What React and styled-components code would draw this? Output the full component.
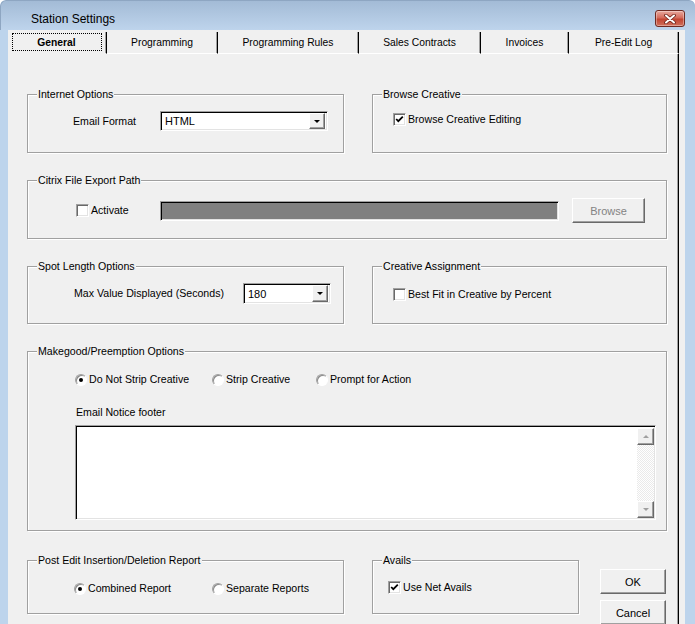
import React from "react";
import styled, { createGlobalStyle, css } from "styled-components";

const GlobalStyle = createGlobalStyle`
    html, body {
        margin: 0;
        padding: 0;
        background: #ffffff;
    }
    body {
        font-family: "Liberation Sans", Arial, sans-serif;
        color: #000;
    }
`;

const raised = css`
    box-sizing: border-box;
    border: 1px solid;
    border-color: #ffffff #696969 #696969 #ffffff;
    box-shadow: inset -1px -1px 0 #a0a0a0;
    background: #f0f0f0;
`;

const sunken = css`
    box-sizing: border-box;
    border: 1px solid;
    border-color: #a0a0a0 #ffffff #ffffff #a0a0a0;
    box-shadow: inset 1px 1px 0 #000000, inset -1px -1px 0 #e3e3e3;
`;

const Window = styled.div`
    width: 695px;
    height: 624px;
    overflow: hidden;
    display: flex;
    flex-direction: column;
    background: #bdd4ec;
    border-top-left-radius: 6px;
    border-top-right-radius: 6px;
`;

const TitleBar = styled.div`
    height: 30px;
    flex: none;
    display: flex;
    align-items: center;
    padding: 6px 10px 0 30px;
    box-sizing: border-box;
    background: linear-gradient(#a3bbd6, #bed4ec);
    border-top: 1px solid #8ea6c2;
    border-left: 1px solid #8ea6c2;
    border-top-left-radius: 6px;
    border-top-right-radius: 6px;
`;

const Title = styled.span`
    flex: 1;
    font-size: 12px;
    color: #000;
`;

const CloseButton = styled.div`
    width: 30px;
    height: 17px;
    box-sizing: border-box;
    border: 1px solid #6e2a22;
    border-radius: 3px;
    background: linear-gradient(#e8a99e 0%, #d46b5c 45%, #c24532 55%, #d0705c 100%);
    box-shadow: inset 0 0 0 1px rgba(255, 255, 255, 0.35);
    display: flex;
    align-items: center;
    justify-content: center;
`;

const Body = styled.div`
    flex: 1;
    display: flex;
    padding: 0 10px 0 8px;
    min-height: 0;
`;

const Client = styled.div`
    flex: 1;
    background: #f0f0f0;
    padding-right: 6px;
    display: flex;
`;

const TabControl = styled.div`
    width: 671px;
    display: flex;
    flex-direction: column;
`;

const TabStrip = styled.div`
    display: flex;
    margin-top: 2px;
    flex: none;
`;

const Tab = styled.div`
    width: ${(p) => p.$w}px;
    height: 22px;
    box-sizing: border-box;
    border-right: 1px solid #000;
    border-bottom: 1px solid ${(p) => (p.$active ? "transparent" : "#ffffff")};
    box-shadow: inset -1px 0 0 #a0a0a0;
    display: flex;
    align-items: center;
    justify-content: center;
    font-size: 10.3px;
    font-weight: ${(p) => (p.$active ? "bold" : "normal")};
`;

const FocusRing = styled.span`
    width: 90px;
    height: 18px;
    margin: -1px 1px 0 0;
    box-sizing: border-box;
    border: 1px dotted #000;
    display: flex;
    align-items: center;
    justify-content: center;
`;

const Panel = styled.div`
    flex: 1;
    border-right: 1px solid #000;
    box-shadow: inset -1px 0 0 #a0a0a0;
    padding: 40px 0 0 19px;
    display: flex;
    flex-direction: column;
    gap: 27px;
    font-size: 10.6px;
`;

const Row = styled.div`
    display: flex;
    align-items: flex-start;
    gap: 28px;
    margin-top: ${(p) => p.$mt || 0}px;
`;

const GroupBox = styled.div`
    position: relative;
    width: ${(p) => p.$w}px;
    height: ${(p) => p.$h}px;
    flex: none;
    box-sizing: border-box;
    border: 1px solid #a0a0a0;
    box-shadow: inset 1px 1px 0 #ffffff, 1px 1px 0 #ffffff;
`;

const GroupTitle = styled.span`
    position: absolute;
    top: -7px;
    left: 9px;
    padding: 0 1px;
    line-height: 13px;
    background: #f0f0f0;
    white-space: nowrap;
`;

const GroupBody = styled.div`
    display: flex;
    flex-direction: ${(p) => p.$dir || "row"};
    align-items: ${(p) => (p.$dir === "column" ? "flex-start" : "center")};
    padding: ${(p) => p.$pt}px 0 0 ${(p) => p.$pl}px;
`;

const Label = styled.span`
    width: ${(p) => (p.$w ? `${p.$w}px` : "auto")};
    flex: none;
    line-height: 13px;
    white-space: nowrap;
`;

const Select = styled.div`
    ${sunken};
    width: ${(p) => p.$w}px;
    height: ${(p) => p.$h}px;
    background: #fff;
    display: flex;
    align-items: center;
    padding: 0 2px 0 4px;
    font-size: 11px;
`;

const SelectValue = styled.span`
    flex: 1;
`;

const DropButton = styled.div`
    ${raised};
    width: 16px;
    height: ${(p) => p.$h}px;
    display: flex;
    align-items: center;
    justify-content: center;
`;

const Arrow = styled.span`
    width: 0;
    height: 0;
    border-left: ${(p) => p.$size}px solid transparent;
    border-right: ${(p) => p.$size}px solid transparent;
    ${(p) =>
        p.$up
            ? css`border-bottom: ${p.$size}px solid ${p.$color};`
            : css`border-top: ${p.$size}px solid ${p.$color};`}
`;

const PathField = styled.div`
    ${sunken};
    width: 399px;
    height: 20px;
    background: #808080;
    margin-right: 13px;
`;

const PushButton = styled.div`
    ${raised};
    width: ${(p) => p.$w}px;
    height: 25px;
    display: flex;
    align-items: center;
    justify-content: center;
    font-size: 11px;
    color: ${(p) => (p.$disabled ? "#838383" : "#000")};
`;

const CheckItem = styled.div`
    display: flex;
    align-items: center;
    gap: 2px;
    width: ${(p) => (p.$w ? `${p.$w}px` : "auto")};
    flex: none;
`;

const CheckBox = styled.span`
    ${sunken};
    width: 13px;
    height: 13px;
    background: #fff;
    display: flex;
    align-items: center;
    justify-content: center;
    box-shadow: inset 1px 1px 0 #696969, inset -1px -1px 0 #e3e3e3;
`;

const RadioItem = styled.div`
    display: flex;
    align-items: center;
    gap: 2px;
    width: ${(p) => (p.$w ? `${p.$w}px` : "auto")};
    flex: none;
`;

const Radio = styled.span`
    width: 12px;
    height: 12px;
    box-sizing: border-box;
    border-radius: 50%;
    border: 1px solid;
    border-color: #a0a0a0 #ffffff #ffffff #a0a0a0;
    box-shadow: inset 1px 1px 0 #8a8a8a;
    background: #fff;
    display: flex;
    align-items: center;
    justify-content: center;
    &::after {
        content: "";
        display: ${(p) => (p.$checked ? "block" : "none")};
        width: 4px;
        height: 4px;
        border-radius: 50%;
        background: #000;
    }
`;

const Caption = styled.span`
    line-height: 13px;
    margin: 20px 0 6px 1px;
`;

const TextArea = styled.div`
    ${sunken};
    width: 581px;
    height: 95px;
    background: #fff;
    display: flex;
    justify-content: flex-end;
    padding: 2px 1px 1px 2px;
`;

const ScrollBar = styled.div`
    width: 17px;
    display: flex;
    flex-direction: column;
`;

const ScrollButton = styled.div`
    ${raised};
    height: 17px;
    display: flex;
    align-items: center;
    justify-content: center;
`;

const ScrollTrack = styled.div`
    flex: 1;
    background: repeating-conic-gradient(#ffffff 0 25%, #eaeaea 0 50%) 0 0 / 2px 2px;
`;

const ButtonColumn = styled.div`
    display: flex;
    flex-direction: column;
    gap: 6px;
    padding-top: 9px;
    margin-left: -7px;
`;

const CheckMark = () => (
    <svg width="9" height="9" viewBox="0 0 9 9">
        <polyline points="1.2,4 3.3,6.2 7.8,1.6" fill="none" stroke="#000" strokeWidth="1.8" />
    </svg>
);

const Check = ({ checked, label, w }) => (
    <CheckItem $w={w}>
        <CheckBox>{checked && <CheckMark />}</CheckBox>
        <Label>{label}</Label>
    </CheckItem>
);

const Option = ({ checked, label, w }) => (
    <RadioItem $w={w}>
        <Radio $checked={checked} />
        <Label>{label}</Label>
    </RadioItem>
);

const Combo = ({ value, w, h }) => (
    <Select $w={w} $h={h}>
        <SelectValue>{value}</SelectValue>
        <DropButton $h={h - 4}>
            <Arrow $size={3.5} $color="#000" />
        </DropButton>
    </Select>
);

const Group = ({ title, w, h, children }) => (
    <GroupBox $w={w} $h={h}>
        <GroupTitle>{title}</GroupTitle>
        {children}
    </GroupBox>
);

const tabs = [
    { label: "General", w: 99, active: true },
    { label: "Programming", w: 111 },
    { label: "Programming Rules", w: 141 },
    { label: "Sales Contracts", w: 122 },
    { label: "Invoices", w: 88 },
    { label: "Pre-Edit Log", w: 110 },
];

const App = () => {
    return (
        <>
            <GlobalStyle />
            <Window>
                <TitleBar>
                    <Title>Station Settings</Title>
                    <CloseButton>
                        <svg width="14" height="10" viewBox="0 0 14 10">
                            <path d="M3 1.5 L11 8.5 M11 1.5 L3 8.5" stroke="#6b2118" strokeWidth="3.6" strokeLinecap="round" />
                            <path d="M3 1.5 L11 8.5 M11 1.5 L3 8.5" stroke="#ffffff" strokeWidth="2" strokeLinecap="round" />
                        </svg>
                    </CloseButton>
                </TitleBar>
                <Body>
                    <Client>
                        <TabControl>
                            <TabStrip>
                                {tabs.map((t) => (
                                    <Tab key={t.label} $w={t.w} $active={t.active}>
                                        {t.active ? <FocusRing>{t.label}</FocusRing> : t.label}
                                    </Tab>
                                ))}
                            </TabStrip>
                            <Panel>
                                <Row>
                                    <Group title="Internet Options" w={317} h={59}>
                                        <GroupBody $pt={16} $pl={45}>
                                            <Label $w={87}>Email Format</Label>
                                            <Combo value="HTML" w={168} h={20} />
                                        </GroupBody>
                                    </Group>
                                    <Group title="Browse Creative" w={295} h={59}>
                                        <GroupBody $pt={18} $pl={20}>
                                            <Check checked label="Browse Creative Editing" />
                                        </GroupBody>
                                    </Group>
                                </Row>
                                <Row>
                                    <Group title="Citrix File Export Path" w={640} h={59}>
                                        <GroupBody $pt={17} $pl={48}>
                                            <Check label="Activate" w={84} />
                                            <PathField />
                                            <PushButton $w={73} $disabled>Browse</PushButton>
                                        </GroupBody>
                                    </Group>
                                </Row>
                                <Row>
                                    <Group title="Spot Length Options" w={317} h={58}>
                                        <GroupBody $pt={16} $pl={46}>
                                            <Label $w={169}>Max Value Displayed (Seconds)</Label>
                                            <Combo value="180" w={88} h={21} />
                                        </GroupBody>
                                    </Group>
                                    <Group title="Creative Assignment" w={295} h={58}>
                                        <GroupBody $pt={21} $pl={20}>
                                            <Check label="Best Fit in Creative by Percent" />
                                        </GroupBody>
                                    </Group>
                                </Row>
                                <Row>
                                    <Group title="Makegood/Preemption Options" w={640} h={180}>
                                        <GroupBody $dir="column" $pt={21} $pl={47}>
                                            <GroupBody $pt={0} $pl={0}>
                                                <Option checked label="Do Not Strip Creative" w={137} />
                                                <Option label="Strip Creative" w={104} />
                                                <Option label="Prompt for Action" />
                                            </GroupBody>
                                            <Caption>Email Notice footer</Caption>
                                            <TextArea>
                                                <ScrollBar>
                                                    <ScrollButton>
                                                        <Arrow $up $size={3.5} $color="#a0a0a0" />
                                                    </ScrollButton>
                                                    <ScrollTrack />
                                                    <ScrollButton>
                                                        <Arrow $size={3.5} $color="#a0a0a0" />
                                                    </ScrollButton>
                                                </ScrollBar>
                                            </TextArea>
                                        </GroupBody>
                                    </Group>
                                </Row>
                                <Row $mt={2}>
                                    <Group title="Post Edit Insertion/Deletion Report" w={317} h={54}>
                                        <GroupBody $pt={21} $pl={46}>
                                            <Option checked label="Combined Report" w={138} />
                                            <Option label="Separate Reports" />
                                        </GroupBody>
                                    </Group>
                                    <Group title="Avails" w={207} h={54}>
                                        <GroupBody $pt={20} $pl={15}>
                                            <Check checked label="Use Net Avails" />
                                        </GroupBody>
                                    </Group>
                                    <ButtonColumn>
                                        <PushButton $w={66}>OK</PushButton>
                                        <PushButton $w={66}>Cancel</PushButton>
                                    </ButtonColumn>
                                </Row>
                            </Panel>
                        </TabControl>
                    </Client>
                </Body>
            </Window>
        </>
    );
};

export default App;
